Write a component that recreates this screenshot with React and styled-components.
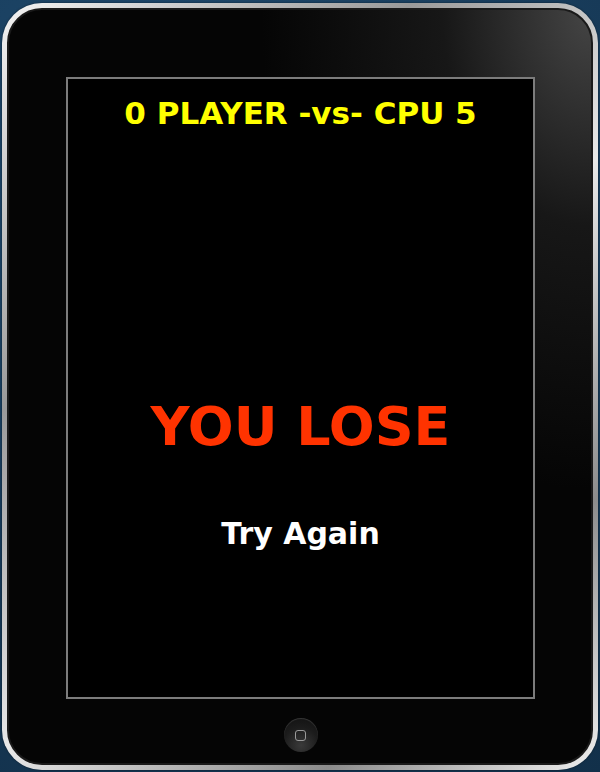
import styled, { createGlobalStyle } from "styled-components";

const Global = createGlobalStyle`
  html, body { margin: 0; padding: 0; }
  body {
    width: 600px;
    height: 772px;
    overflow: hidden;
    background: radial-gradient(circle at 30% 20%, #1f4a6e 0%, #173a58 60%, #12304a 100%);
    font-family: "DejaVu Sans", "Liberation Sans", sans-serif;
  }
`;

const Device = styled.div`
  box-sizing: border-box;
  margin: 3px 2px 2px 2px;
  height: 767px;
  padding: 5px;
  border-radius: 40px;
  background: linear-gradient(135deg, #f4f4f4 0%, #9a9a9a 30%, #e8e8e8 55%, #8c8c8c 80%, #f0f0f0 100%);
  box-shadow: 0 0 2px rgba(0, 0, 0, 0.6);
`;

const Bezel = styled.div`
  box-sizing: border-box;
  height: 100%;
  border-radius: 35px;
  border: 2px solid #1a1a1a;
  background:
    radial-gradient(ellipse 330px 480px at 100% 0%, rgba(85, 85, 85, 0.8) 0%, rgba(45, 45, 45, 0.45) 45%, rgba(0, 0, 0, 0) 100%),
    #050505;
  padding: 67px 57px 0 58px;
  display: flex;
  flex-direction: column;
  align-items: center;
`;

const Screen = styled.div`
  box-sizing: border-box;
  width: 469px;
  height: 622px;
  border: 2px solid #7c7c7c;
  background: #000;
  display: flex;
  flex-direction: column;
  align-items: center;
  padding-top: 16px;
`;

const Score = styled.div`
  color: #ffff00;
  font-weight: bold;
  font-size: 31px;
  line-height: 36px;
  white-space: nowrap;
`;

const Result = styled.div`
  margin-top: 264px;
  color: #ff3300;
  font-weight: bold;
  font-size: 54px;
  line-height: 64px;
`;

const Retry = styled.div`
  margin-top: 57px;
  color: #ffffff;
  font-weight: bold;
  font-size: 30px;
  line-height: 36px;
  cursor: pointer;
`;

const HomeButton = styled.div`
  margin-top: 19px;
  width: 34px;
  height: 34px;
  border-radius: 50%;
  background: radial-gradient(circle at 50% 80%, #3a3a3a 0%, #1c1c1c 55%, #101010 100%);
  box-shadow: inset 0 1px 1px rgba(255, 255, 255, 0.15);
  display: flex;
  align-items: center;
  justify-content: center;
`;

const HomeSquare = styled.div`
  width: 9px;
  height: 9px;
  border: 1.5px solid #9a9a9a;
  border-radius: 3px;
`;

export default function App() {
  return (
    <>
      <Global />
      <Device>
        <Bezel>
          <Screen>
            <Score>0 PLAYER -vs- CPU 5</Score>
            <Result>YOU LOSE</Result>
            <Retry>Try Again</Retry>
          </Screen>
          <HomeButton>
            <HomeSquare />
          </HomeButton>
        </Bezel>
      </Device>
    </>
  );
}
